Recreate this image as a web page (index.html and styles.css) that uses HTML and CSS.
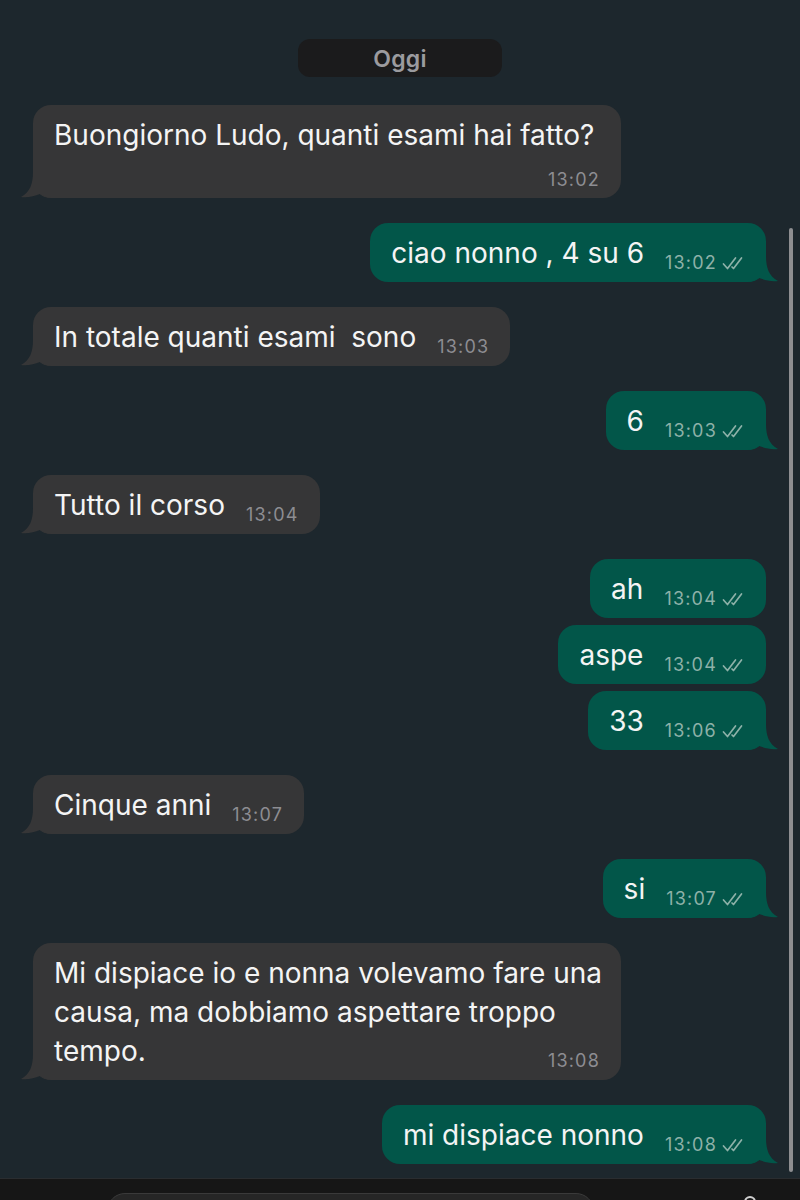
FILE: index.html
```html
<!DOCTYPE html>
<html lang="it">
<head>
    <meta charset="UTF-8">
    <meta name="viewport" content="width=device-width, initial-scale=1.0">
    <title>Chat</title>
    <link rel="stylesheet" href="styles.css">
</head>
<body>
    <div class="chat">
        <div class="day"><span>Oggi</span></div>

        <div class="row in">
            <div class="bubble drop"><svg class="tail" viewBox="0 0 36 30"><path d="M13 4C13 16 10 24 1 29C8 30 14 28 20 26C23 28 27 30 34 30L34 4Z"/></svg>Buongiorno Ludo, quanti esami hai fatto?<span class="meta">13:02</span></div>
        </div>

        <div class="row out">
            <div class="bubble"><svg class="tail" viewBox="0 0 36 30"><path d="M13 4C13 16 10 24 1 29C8 30 14 28 20 26C23 28 27 30 34 30L34 4Z"/></svg>ciao nonno , 4 su 6<span class="meta">13:02<svg class="ticks" viewBox="0 0 23 14"><path d="M1.5 8L5.5 12.5L13.5 2M10 11L11.5 12.5L19.5 2"/></svg></span></div>
        </div>

        <div class="row in">
            <div class="bubble"><svg class="tail" viewBox="0 0 36 30"><path d="M13 4C13 16 10 24 1 29C8 30 14 28 20 26C23 28 27 30 34 30L34 4Z"/></svg>In totale quanti esami&nbsp; sono<span class="meta">13:03</span></div>
        </div>

        <div class="row out">
            <div class="bubble"><svg class="tail" viewBox="0 0 36 30"><path d="M13 4C13 16 10 24 1 29C8 30 14 28 20 26C23 28 27 30 34 30L34 4Z"/></svg>6<span class="meta">13:03<svg class="ticks" viewBox="0 0 23 14"><path d="M1.5 8L5.5 12.5L13.5 2M10 11L11.5 12.5L19.5 2"/></svg></span></div>
        </div>

        <div class="row in">
            <div class="bubble"><svg class="tail" viewBox="0 0 36 30"><path d="M13 4C13 16 10 24 1 29C8 30 14 28 20 26C23 28 27 30 34 30L34 4Z"/></svg>Tutto il corso<span class="meta">13:04</span></div>
        </div>

        <div class="row out">
            <div class="bubble">ah<span class="meta">13:04<svg class="ticks" viewBox="0 0 23 14"><path d="M1.5 8L5.5 12.5L13.5 2M10 11L11.5 12.5L19.5 2"/></svg></span></div>
        </div>
        <div class="row out cont">
            <div class="bubble">aspe<span class="meta">13:04<svg class="ticks" viewBox="0 0 23 14"><path d="M1.5 8L5.5 12.5L13.5 2M10 11L11.5 12.5L19.5 2"/></svg></span></div>
        </div>
        <div class="row out cont">
            <div class="bubble"><svg class="tail" viewBox="0 0 36 30"><path d="M13 4C13 16 10 24 1 29C8 30 14 28 20 26C23 28 27 30 34 30L34 4Z"/></svg>33<span class="meta">13:06<svg class="ticks" viewBox="0 0 23 14"><path d="M1.5 8L5.5 12.5L13.5 2M10 11L11.5 12.5L19.5 2"/></svg></span></div>
        </div>

        <div class="row in">
            <div class="bubble"><svg class="tail" viewBox="0 0 36 30"><path d="M13 4C13 16 10 24 1 29C8 30 14 28 20 26C23 28 27 30 34 30L34 4Z"/></svg>Cinque anni<span class="meta">13:07</span></div>
        </div>

        <div class="row out">
            <div class="bubble"><svg class="tail" viewBox="0 0 36 30"><path d="M13 4C13 16 10 24 1 29C8 30 14 28 20 26C23 28 27 30 34 30L34 4Z"/></svg>si<span class="meta">13:07<svg class="ticks" viewBox="0 0 23 14"><path d="M1.5 8L5.5 12.5L13.5 2M10 11L11.5 12.5L19.5 2"/></svg></span></div>
        </div>

        <div class="row in">
            <div class="bubble wide"><svg class="tail" viewBox="0 0 36 30"><path d="M13 4C13 16 10 24 1 29C8 30 14 28 20 26C23 28 27 30 34 30L34 4Z"/></svg>Mi dispiace io e nonna volevamo fare una<br>causa, ma dobbiamo aspettare troppo<br>tempo.<span class="meta">13:08</span></div>
        </div>

        <div class="row out">
            <div class="bubble"><svg class="tail" viewBox="0 0 36 30"><path d="M13 4C13 16 10 24 1 29C8 30 14 28 20 26C23 28 27 30 34 30L34 4Z"/></svg>mi dispiace nonno<span class="meta">13:08<svg class="ticks" viewBox="0 0 23 14"><path d="M1.5 8L5.5 12.5L13.5 2M10 11L11.5 12.5L19.5 2"/></svg></span></div>
        </div>
    </div>

    <div class="composer">
        <div class="input"></div>
        <span class="cam"></span>
    </div>

    <div class="scrollbar"></div>
</body>
</html>
```

FILE: styles.css
```css
body {
    margin: 0;
    background-color: #1d272d;
    font-family: Inter, "Liberation Sans", sans-serif;
    color: #f4f4f4;
    position: relative;
    height: 1200px;
    overflow: hidden;
}
.chat {
    padding: 39px 0 14px;
}
.day {
    display: flex;
    justify-content: center;
    margin-bottom: 28px;
}
.day span {
    width: 204px;
    height: 38px;
    line-height: 40px;
    text-align: center;
    background: #1b1b1c;
    border-radius: 12px;
    color: #9b9b9f;
    font-size: 23px;
    font-weight: 600;
    letter-spacing: 0.3px;
}
.row {
    display: flex;
    margin-top: 25px;
}
.day + .row {
    margin-top: 0;
}
.row.cont {
    margin-top: 7px;
}
.row.in {
    padding-left: 33px;
}
.row.out {
    justify-content: flex-end;
    padding-right: 34px;
}
.bubble {
    position: relative;
    display: flow-root;
    max-width: 546px;
    padding: 11px 21px 9px;
    border-radius: 18px;
    font-size: 28px;
    line-height: 39px;
}
.bubble.wide {
    width: 546px;
    white-space: nowrap;
}
.in .bubble {
    background: #363637;
}
.out .bubble {
    background: #025649;
}
.tail {
    position: absolute;
    bottom: 0;
    width: 36px;
    height: 30px;
}
.in .tail {
    left: -13px;
    fill: #363637;
}
.out .tail {
    right: -13px;
    fill: #025649;
    transform: scaleX(-1);
}
.meta {
    float: right;
    display: flex;
    align-items: center;
    gap: 5px;
    margin: 20px 0 0 21px;
    font-size: 18px;
    line-height: 18px;
    letter-spacing: 1.2px;
    color: #8d8d92;
}
.drop .meta {
    margin-top: 16px;
}
.out .meta {
    color: #8db1a8;
}
.ticks {
    width: 23px;
    height: 14px;
    fill: none;
    stroke: #8db1a8;
    stroke-width: 1.7;
    stroke-linecap: round;
    stroke-linejoin: round;
}
.composer {
    display: flex;
    align-items: flex-start;
    height: 60px;
    background: #161616;
    border-top: 1px solid #2a2d30;
    padding-top: 14px;
}
.input {
    margin-left: 107px;
    width: 485px;
    height: 36px;
    border-radius: 18px;
    background: #262626;
    border: 1px solid #3a3a3a;
}
.cam {
    margin: 3px 0 0 150px;
    width: 8px;
    height: 8px;
    border-radius: 50%;
    border: 2px solid #d0d0d0;
}
.scrollbar {
    position: absolute;
    top: 228px;
    right: 7px;
    width: 4px;
    height: 944px;
    border-radius: 2px;
    background: #8e8e91;
}
```
